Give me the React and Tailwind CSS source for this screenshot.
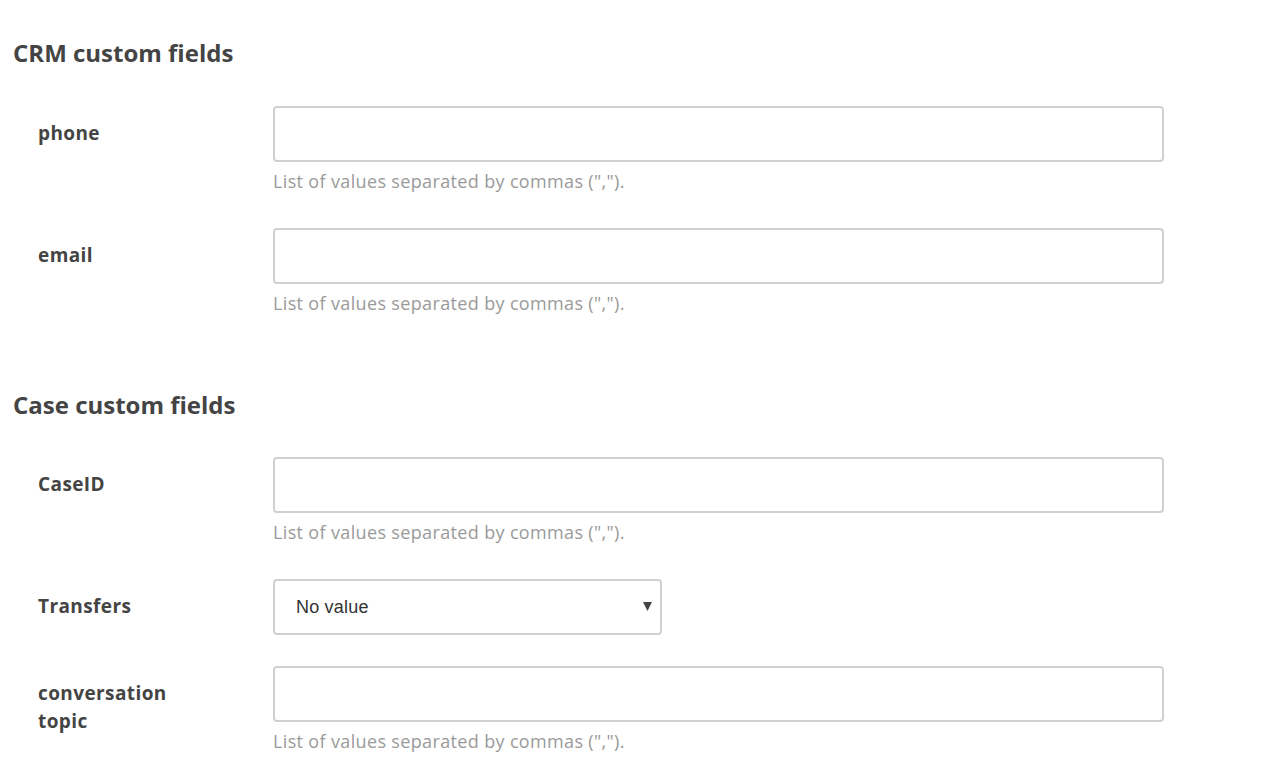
import { useState } from 'react'

const font = { fontFamily: '"Open Sans", "Noto Sans", sans-serif' }

function TextRow({ label, help = true }) {
  const [value, setValue] = useState('')
  return (
    <div className="grid grid-cols-[260px_891px]">
      <label className="pl-[25px] pt-[13px] pr-[80px] text-[19px] leading-[28px] font-bold tracking-[0.4px] text-[#444]">{label}</label>
      <div>
        <input
          type="text"
          value={value}
          onChange={(e) => setValue(e.target.value)}
          className="block w-full h-[56px] rounded-[4px] border-2 border-[#d0d0d0] bg-white px-4 text-[18px] text-[#333] outline-none"
        />
        {help && (
          <p className="mt-[7px] text-[18px] leading-[24px] tracking-[0.35px] text-[#9a9a9a]">List of values separated by commas (",").</p>
        )}
      </div>
    </div>
  )
}

function SelectRow({ label }) {
  return (
    <div className="grid grid-cols-[260px_891px]">
      <label className="pl-[25px] pt-[13px] text-[19px] leading-[28px] font-bold tracking-[0.4px] text-[#444]">{label}</label>
      <div className="relative w-[389px]">
        <select
          defaultValue=""
          className="block w-full h-[56px] appearance-none rounded-[4px] border-2 border-[#d0d0d0] bg-white pl-[21px] pr-8 text-[18px] tracking-[0.2px] text-[#333] outline-none"
          style={{ fontFamily: '"Liberation Sans", Arial, sans-serif' }}
        >
          <option value="">No value</option>
        </select>
        <svg className="absolute right-[10px] top-[23px] pointer-events-none" width="9" height="9" viewBox="0 0 9 9">
          <path d="M0 0h9L4.5 9z" fill="#444" />
        </svg>
      </div>
    </div>
  )
}

export default function App() {
  return (
    <div className="min-h-screen bg-white pl-[13px] pt-[38px]" style={font}>
      <h2 className="text-[24px] leading-[30px] font-bold text-[#444]">CRM custom fields</h2>
      <div className="mt-[38px] space-y-[35px]">
        <TextRow label="phone" />
        <TextRow label="email" />
      </div>

      <h2 className="mt-[75px] text-[24px] leading-[30px] font-bold text-[#444]">Case custom fields</h2>
      <div className="mt-[37px] flex flex-col">
        <TextRow label="CaseID" />
        <div className="mt-[35px]">
          <SelectRow label="Transfers" />
        </div>
        <div className="mt-[31px]">
          <TextRow label="conversation topic" />
        </div>
      </div>
    </div>
  )
}
